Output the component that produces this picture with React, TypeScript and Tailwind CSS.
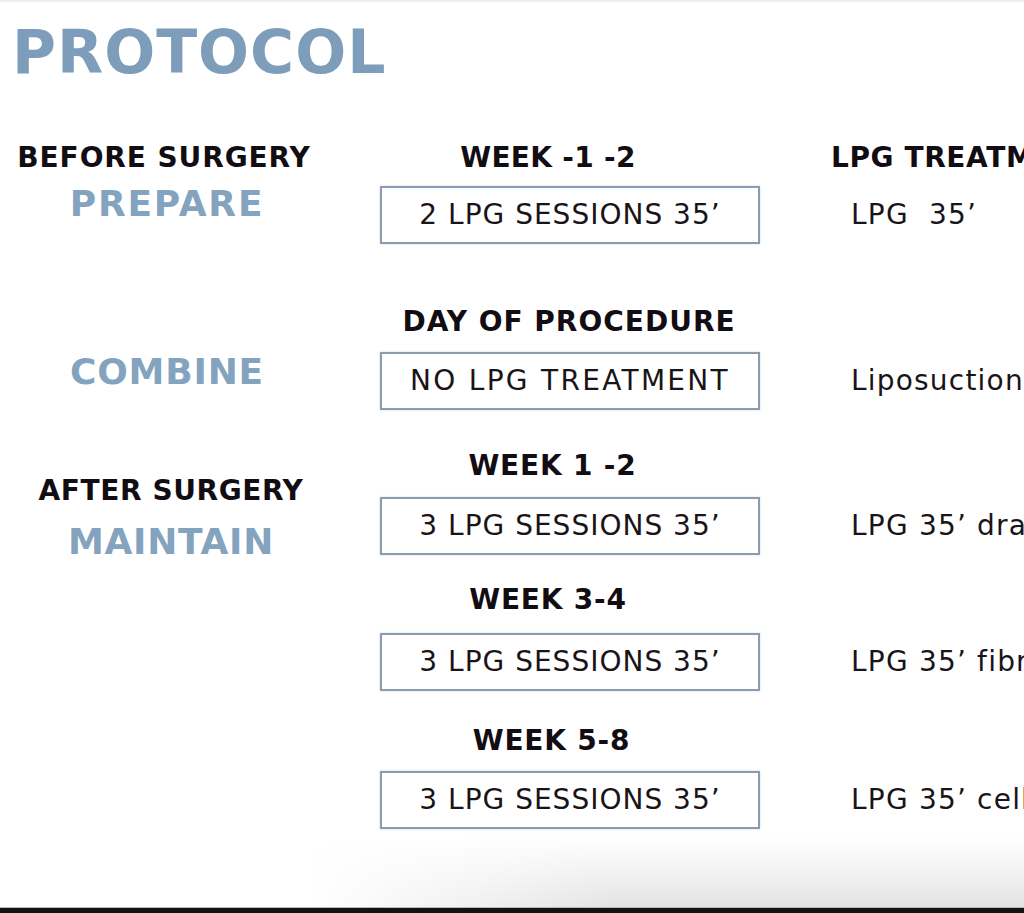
import React from 'react';

const rows = [
  {
    left: (
      <div className="flex flex-col items-center">
        <span className="pr-[6px] text-[28px] leading-none font-bold tracking-[0.9px] text-[#120d12]">BEFORE SURGERY</span>
        <span className="mt-[14px] text-[36px] leading-none font-bold tracking-[1.8px] text-[#84a3be]">PREPARE</span>
      </div>
    ),
    header: 'WEEK -1 -2',
    headerPad: 'pr-[44px] tracking-[0.3px]',
    box: '2 LPG SESSIONS 35’',
    boxTrack: 'tracking-[1px]',
    rightHeader: 'LPG TREATMENT',
    right: 'LPG\u00a0\u00a035’',
    rowGap: 'mt-[62px]',
    boxGap: 'mt-[14px]'
  },
  {
    left: (
      <div className="flex flex-col items-center pt-[46px]">
        <span className="text-[36px] leading-none font-bold tracking-[0.8px] text-[#84a3be]">COMBINE</span>
      </div>
    ),
    header: 'DAY OF PROCEDURE',
    headerPad: 'pr-[2px] tracking-[1px]',
    box: 'NO LPG TREATMENT',
    boxTrack: 'tracking-[2.3px]',
    rightHeader: '',
    right: 'Liposuction',
    rowGap: 'mt-[64px]',
    boxGap: 'mt-[16px]'
  },
  {
    left: (
      <div className="flex flex-col items-center pt-[25px] pl-[8px]">
        <span className="text-[28px] leading-none font-bold tracking-[0.6px] text-[#120d12]">AFTER SURGERY</span>
        <span className="mt-[19px] text-[36px] leading-none font-bold tracking-[0.7px] text-[#84a3be]">MAINTAIN</span>
      </div>
    ),
    header: 'WEEK 1 -2',
    headerPad: 'pr-[35px] tracking-[0.8px]',
    box: '3 LPG SESSIONS 35’',
    boxTrack: 'tracking-[1px]',
    rightHeader: '',
    right: 'LPG 35’ drainage',
    rowGap: 'mt-[42px]',
    boxGap: 'mt-[17px]'
  },
  {
    left: null,
    header: 'WEEK 3-4',
    headerPad: 'pr-[44px] tracking-[0.8px]',
    box: '3 LPG SESSIONS 35’',
    boxTrack: 'tracking-[1px]',
    rightHeader: '',
    right: 'LPG 35’ fibrosis',
    rowGap: 'mt-[26px]',
    boxGap: 'mt-[19px]'
  },
  {
    left: null,
    header: 'WEEK 5-8',
    headerPad: 'pr-[37px] tracking-[0.8px]',
    box: '3 LPG SESSIONS 35’',
    boxTrack: 'tracking-[1px]',
    rightHeader: '',
    right: 'LPG 35’ cellulite',
    rowGap: 'mt-[36px]',
    boxGap: 'mt-[16px]'
  }
];

const App = () => {
  return (
    <div className="h-[913px] w-[1024px] overflow-hidden bg-white flex flex-col font-['DejaVu_Sans',sans-serif] shadow-[inset_0_3px_3px_-2px_rgba(0,0,0,0.12)]">
      <h1 className="mt-[22px] pl-[12px] text-[60px] leading-none font-bold tracking-[1px] text-[#7d9dba]">PROTOCOL</h1>

      {rows.map((row, index) => (
        <div key={index} className={`flex items-start ${row.rowGap}`}>
          {/* Left: phase labels */}
          <div className="w-[334px] shrink-0">{row.left}</div>

          {/* Middle: week + sessions box */}
          <div className="ml-[46px] w-[380px] shrink-0 flex flex-col">
            <div className={`text-center text-[28px] leading-none font-bold text-[#120d12] whitespace-nowrap ${row.headerPad}`}>
              {row.header}
            </div>
            <div className={`${row.boxGap} h-[58px] border-2 border-[#8b9cb0] flex items-center justify-center shadow-[0_0_2px_rgba(120,140,165,0.35)]`}>
              <span className={`text-[28px] leading-none text-[#1a1419] whitespace-nowrap ${row.boxTrack}`}>{row.box}</span>
            </div>
          </div>

          {/* Right: LPG treatment column */}
          <div className="ml-[71px] min-w-0 flex-1 flex flex-col whitespace-nowrap">
            <div className="h-[28px] text-[28px] leading-none font-bold tracking-[0.6px] text-[#120d12]">{row.rightHeader}</div>
            <div className={`${row.boxGap} h-[58px] flex items-center pl-[20px]`}>
              <span className="text-[28px] leading-none tracking-[1.2px] text-[#1a1419]">{row.right}</span>
            </div>
          </div>
        </div>
      ))}

      <div className="flex-1 flex flex-col justify-end">
        <div className="h-[70px] bg-[linear-gradient(to_right,#ffffff_30%,rgba(255,255,255,0)_60%),linear-gradient(to_bottom,#ffffff,#e4e4e4)]"></div>
      </div>
      <div className="h-[1px] bg-[#b9b9b9]"></div>
      <div className="h-[5px] bg-[#121210]"></div>
    </div>
  );
};

export default App;
